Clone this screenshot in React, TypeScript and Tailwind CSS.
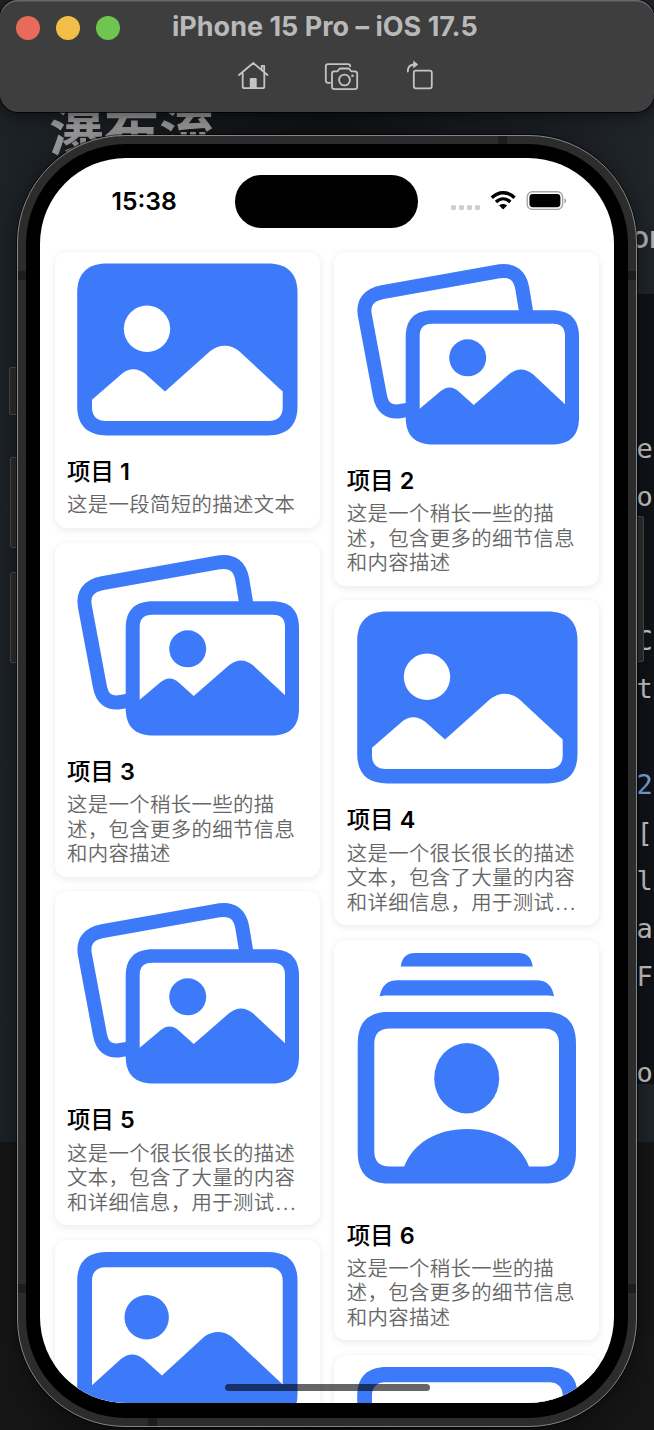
import type { ReactNode } from "react";

const BLUE = "#3d7afa";

function PhotoFill() {
  return (
    <svg width="242" height="192" className="block overflow-visible">
      <path fill={BLUE} d="M11.2 29C11.2 9 22 -.4 41 -.4H201.6C221 -.4 231.5 9 231.5 29V142C231.5 162 221 171.4 201.6 171.4H41C22 171.4 11.2 162 11.2 142Z" />
      <circle cx="81" cy="64.8" r="23.2" fill="#fff" />
      <path fill="#fff" d="M26 135.8L56.5 109.2C63.5 103.8 72 103.8 79.5 110L99 127.5L144 87.3C152.5 79.8 164.5 79.8 173 87L216.7 127.5V143.5C216.7 152 211.5 156.9 203 156.9H39.5C31 156.9 26 152 26 143.5Z" />
    </svg>
  );
}

function PhotoOutline() {
  return (
    <svg width="242" height="192" className="block overflow-visible">
      <path fill={BLUE} d="M11.2 29C11.2 9 22 0 41 0H201.6C221 0 231.5 9 231.5 29V142C231.5 162 221 171.8 201.6 171.8H41C22 171.8 11.2 162 11.2 142Z" />
      <path fill="#fff" d="M26 28.5C26 20 31 15.3 39.5 15.3H203C211.5 15.3 216.7 20 216.7 28.5V132.5L166.3 85.2C158 78.4 147 78.4 138.5 84.5L96 123.5L77.3 106.8C70 101 62.5 101 55.2 106.8L26 133.2Z" />
      <circle cx="80.7" cy="65.2" r="22.2" fill={BLUE} />
    </svg>
  );
}

function PhotoStack() {
  return (
    <svg width="242" height="201" className="block overflow-visible">
      <path
        fill="none"
        stroke={BLUE}
        strokeWidth="14"
        d="M181 53L176.2 24C173.8 11 166 5.6 154 7.2L36.5 28.1C22.5 30.8 16.7 38.6 18.8 51L33.8 131C36 144 43 149 55 147L68 144.6"
      />
      <path fill={BLUE} d="M59.7 73C59.7 55 69 46.2 87 46.2H206C224 46.2 233 55 233 73V153.5C233 171.5 224 180.5 206 180.5H87C69 180.5 59.7 171.5 59.7 153.5Z" />
      <path fill="#fff" d="M73.7 72C73.7 64 78 59.8 86 59.8H207C215 59.8 219 64 219 72V140.2L187 110.3C179 104 171 104 163 110.3L127.7 141L113 127.7C106.5 122.3 101.5 122.3 94.8 127L73.7 144.8Z" />
      <circle cx="121.7" cy="93.8" r="18.5" fill={BLUE} />
    </svg>
  );
}

function PersonStack() {
  return (
    <svg width="242" height="268" className="block overflow-visible">
      <path fill={BLUE} d="M54.7 14.5C56 5 61 .9 69 .9H172.5C180.5 .9 185.5 5 186.7 14.5Z" />
      <path fill={BLUE} d="M33.7 44.2C35.5 34 41 28.2 52 28.2H190C201 28.2 206.5 34 208 44.2C206 43.5 204 43.4 202 43.4H40C38 43.4 36 43.5 33.7 44.2Z" />
      <path fill={BLUE} d="M11.7 92C11.7 70 22 59.9 43 59.9H199C220 59.9 230 70 230 92V200C230 221 220 231.5 199 231.5H43C22 231.5 11.7 221 11.7 200Z" />
      <path fill="#fff" d="M28.3 92C28.3 81.5 33.5 76.5 44 76.5H198C208 76.5 213 81.5 213 92V199C213 209.5 208 214.5 198 214.5H183C174 191 150 176.9 120.5 176.9C91 176.9 67 191 58.2 214.5H44C33.5 214.5 28.3 209.5 28.3 199Z" />
      <ellipse cx="120.7" cy="126.2" rx="32.5" ry="35.2" fill={BLUE} />
    </svg>
  );
}

function Card({ n, art, artClass, lines }: { n: number; art: ReactNode; artClass: string; lines: string[] }) {
  return (
    <article className="shrink-0 rounded-[12px] bg-white p-[11.7px] shadow-[0_2px_9px_rgba(0,0,0,0.09)]">
      <div className={artClass}>{art}</div>
      <h2 className="h-[30px] whitespace-nowrap pt-px pl-[0.8px] text-[23.4px] leading-[30px] font-medium text-black">
        项目 <span className="font-semibold">{n}</span>
      </h2>
      <div className="mt-[7.3px] -mb-[1.5px] pl-[0.8px]">
        {lines.map((l) => (
          <p key={l} className="h-[24.45px] whitespace-nowrap text-[20.4px] leading-[24.45px] font-[350] tracking-[0.35px] text-[#666]">
            {l.replace("…", "")}
            {l.endsWith("…") && <span className="ml-[1px] tracking-[1.5px]">...</span>}
          </p>
        ))}
      </div>
    </article>
  );
}

const SHORT = ["这是一段简短的描述文本"];
const MEDIUM = ["这是一个稍长一些的描", "述，包含更多的细节信息", "和内容描述"];
const LONG = ["这是一个很长很长的描述", "文本，包含了大量的内容", "和详细信息，用于测试…"];

const H1 = "h-[192.4px]";
const H2 = "h-[201.2px]";
const H3 = "h-[267.9px]";

const CODE = ["e", "o", "", "", "C", "t", "", "2", "[", "l", "a", "F", "", "o"];

function Desktop() {
  return (
    <div className="absolute inset-0 flex flex-col overflow-hidden bg-[#1c2126]">
      <div className="h-[1142px] shrink-0 bg-linear-to-r from-[#1d2227] via-[#101215] to-[#20252a]">
        <div className="ml-auto flex h-[1084px] w-[40px] flex-col pt-[294px]">
          <div className="h-[790px] bg-[#0f1217] pt-[131px] pl-[22.5px]">
            {CODE.map((c, i) => (
              <div
                key={i}
                className={`h-[48px] font-['DejaVu_Sans_Mono',monospace] text-[27px] leading-[48px] ${c === "2" ? "text-[#7aa2d8]" : "text-[#c4c4c4]"}`}
              >
                {c}
              </div>
            ))}
          </div>
        </div>
      </div>
      <div className="grow bg-linear-to-r from-[#161616] via-[#0a0a0a] to-[#161616]" />
      <div className="absolute top-[91px] left-[49px] text-[55px] leading-[80px] font-bold whitespace-nowrap text-[#999]">瀑布流</div>
      <div className="absolute top-[217px] left-[631px] text-[30px] leading-[40px] font-medium text-[#b0b0b0]">or</div>
    </div>
  );
}

function TitleBar() {
  return (
    <header className="relative flex h-[112px] flex-col rounded-[18px] bg-[#3e3e3e] shadow-[0_0_0_1px_rgba(0,0,0,0.8),0_4px_16px_rgba(0,0,0,0.5),inset_0_1.5px_0_#696969]">
      <div className="relative flex h-[55px] items-center gap-[16px] pl-[16px]">
        <span className="size-[24px] rounded-full bg-[#e76a5b]" />
        <span className="size-[24px] rounded-full bg-[#f3be47]" />
        <span className="size-[24px] rounded-full bg-[#70c450]" />
        <h1 className="-mt-[1px] ml-[36px] font-['Inter',sans-serif] text-[27px] leading-[32px] font-bold whitespace-nowrap text-[#b9b9b9]">
          iPhone 15 Pro – iOS 17.5
        </h1>
      </div>
      <div className="flex pt-[5px] pl-[237px] text-[#c4c4c4]">
        <svg width="32" height="30" viewBox="237 60 32 30" fill="none" stroke="currentColor" strokeWidth="1.8" strokeLinecap="round" strokeLinejoin="round">
          <path d="M239 75L253.3 63L267.5 75M242.7 73V86.5Q242.7 88.2 244.4 88.2H262.6Q264.3 88.2 264.3 86.5V73M261.7 69.5V65.8H264.2V72" />
          <path d="M249.8 88V79Q249.8 78 250.8 78H255.7Q256.7 78 256.7 79V88Z" fill="currentColor" stroke="none" />
        </svg>
        <svg width="36" height="30" viewBox="324 60 36 30" fill="none" stroke="currentColor" strokeWidth="1.8" strokeLinecap="round" strokeLinejoin="round" className="ml-[55px]">
          <path d="M330 82.8H328Q325.8 82.8 325.8 80.6V66.3Q325.8 64.1 328 64.1H348Q350.2 64.1 350.2 66.3" />
          <path d="M334 71.3H337.5L339.3 69Q339.8 68.5 340.8 68.5H347.8Q348.8 68.5 349.3 69L351.2 71.3H354.7Q357.2 71.3 357.2 73.8V86.7Q357.2 89.1 354.7 89.1H334.5Q332 89.1 332 86.7V73.8Q332 71.3 334 71.3Z" />
          <circle cx="344.5" cy="80" r="5.4" />
          <circle cx="352.5" cy="75.7" r="1.3" fill="currentColor" stroke="none" />
        </svg>
        <svg width="30" height="30" viewBox="405 60 30 30" fill="none" stroke="currentColor" strokeWidth="1.8" strokeLinecap="round" strokeLinejoin="round" className="ml-[45px]">
          <rect x="413.8" y="70.7" width="18" height="17.6" rx="2" />
          <path d="M407.8 71.5Q407.8 64.5 414.5 64.5H415.5" />
          <path d="M413.8 61.5L417.8 64.5L413.8 67.5Z" fill="currentColor" strokeWidth="0.8" />
        </svg>
      </div>
    </header>
  );
}

function StatusBar() {
  return (
    <div className="flex h-[94px] shrink-0">
      <div className="mt-[27px] ml-[71.5px] w-[123.5px] font-['Inter',sans-serif] text-[24.7px] leading-[32px] font-semibold text-black">15:38</div>
      <div className="mt-[16.5px] h-[53.5px] w-[183px] rounded-full bg-black" />
      <div className="mt-[46.5px] ml-[33px] flex gap-[3px]">
        {[0, 1, 2, 3].map((i) => (
          <span key={i} className="size-[5px] rounded-[1.5px] bg-[#cfcfcf]" />
        ))}
      </div>
      <svg width="26" height="20" viewBox="490.5 190 26 20" className="mt-[32px] ml-[10px]" fill="none" stroke="#000">
        <path d="M492.3 197.8C499 191 508.3 191 515 197.8" strokeWidth="3.4" />
        <path d="M496.5 202C501 197.7 506.3 197.7 510.8 202" strokeWidth="3.3" />
        <path d="M503.6 209.4L499.6 205.4C502 203.4 505.2 203.4 507.6 205.4Z" fill="#000" stroke="none" />
      </svg>
      <svg width="42" height="20" viewBox="526 190 42 20" className="mt-[32px] ml-[9.5px]">
        <rect x="527.2" y="191.8" width="35.4" height="17.6" rx="5.2" fill="none" stroke="#a5a5a5" strokeWidth="1.4" />
        <rect x="529.4" y="194" width="31" height="13.2" rx="3.4" />
        <path d="M564.3 198V203.5Q566.2 202.7 566.2 200.8T564.3 198Z" fill="#a5a5a5" />
      </svg>
    </div>
  );
}

function Phone() {
  return (
    <div className="absolute top-[135px] left-[17px] h-[1292px] w-[620px]">
      <span className="absolute top-[232px] left-[-8px] h-[48px] w-[10px] rounded-l-[2px] border border-[#484848] bg-[#2c2c2c]" />
      <span className="absolute top-[322px] left-[-7px] h-[91px] w-[9px] rounded-l-[2px] border border-[#484848] bg-[#2c2c2c]" />
      <span className="absolute top-[437px] left-[-7px] h-[91px] w-[9px] rounded-l-[2px] border border-[#484848] bg-[#2c2c2c]" />
      <span className="absolute top-[381px] right-[-7px] h-[146px] w-[9px] rounded-r-[2px] border border-[#484848] bg-[#2c2c2c]" />
      <div className="relative h-full rounded-[108px] border border-[#858585] bg-[#2c2c2c] p-[8px] shadow-[0_0_0_1px_#0008,0_4px_24px_rgba(0,0,0,0.4)]">
        <span className="absolute top-[135px] left-0 h-[9px] w-full bg-[#1d1d1d]" />
        <span className="absolute bottom-[133px] left-0 h-[9px] w-full bg-[#1d1d1d]" />
        <span className="absolute top-0 left-[480px] h-[20px] w-[9px] bg-[#1d1d1d]" />
        <span className="absolute bottom-0 left-[130px] h-[20px] w-[9px] bg-[#1d1d1d]" />
        <div className="relative h-full rounded-[100px] bg-black px-[14px] pt-[14px] pb-[15px]">
          <main className="relative flex h-[1245px] flex-col overflow-hidden rounded-[86px] bg-white">
            <StatusBar />
            <div className="flex gap-[14.6px] px-[14.6px]">
              <div className="flex w-[265.1px] flex-col gap-[14.9px]">
                <Card n={1} art={<PhotoFill />} artClass={H1} lines={SHORT} />
                <Card n={3} art={<PhotoStack />} artClass={H2} lines={MEDIUM} />
                <Card n={5} art={<PhotoStack />} artClass={H2} lines={LONG} />
                <Card n={7} art={<PhotoOutline />} artClass={H1} lines={SHORT} />
              </div>
              <div className="flex w-[265.1px] flex-col gap-[14.7px]">
                <Card n={2} art={<PhotoStack />} artClass={H2} lines={MEDIUM} />
                <Card n={4} art={<PhotoFill />} artClass={H1} lines={LONG} />
                <Card n={6} art={<PersonStack />} artClass={H3} lines={MEDIUM} />
                <Card n={8} art={<PhotoOutline />} artClass={H1} lines={LONG} />
              </div>
            </div>
            <div className="absolute bottom-[12px] left-[185px] h-[7px] w-[205px] rounded-full bg-black/60" />
          </main>
        </div>
      </div>
    </div>
  );
}

export default function App() {
  return (
    <div className="relative h-[1430px] w-[654px] overflow-hidden font-['Inter','Noto_Sans_CJK_SC',sans-serif]">
      <Desktop />
      <Phone />
      <TitleBar />
    </div>
  );
}
